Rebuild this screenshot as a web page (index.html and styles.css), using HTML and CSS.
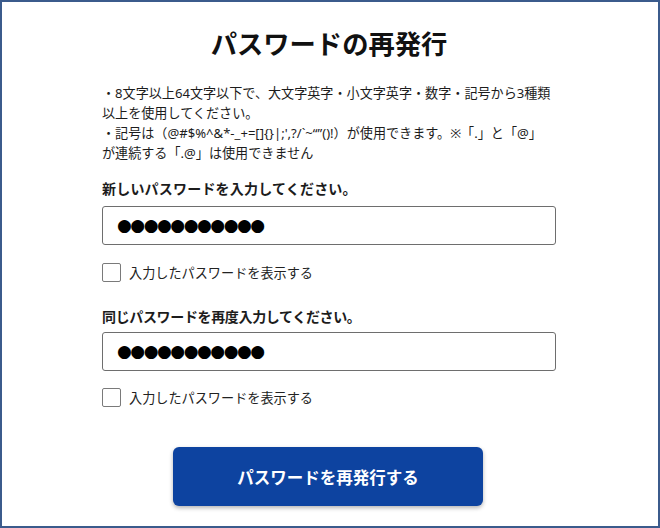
FILE: index.html
```html
<!DOCTYPE html>
<html lang="ja">
<head>
<meta charset="utf-8">
<title>パスワードの再発行</title>
<link rel="stylesheet" href="styles.css">
</head>
<body>
<div class="frame">
  <main class="panel">
    <h1 class="title">パスワードの再発行</h1>
    <div class="notes">
      <p class="note">・8文字以上64文字以下で、大文字英字・小文字英字・数字・記号から3種類<br>以上を使用してください。</p>
      <p class="note">・記号は（@#$%^&amp;*-_+=[]{}|;',?/`~“”()!）が使用できます。※「.」と「@」<br>が連続する「.@」は使用できません</p>
    </div>
    <label class="label label-first">新しいパスワードを入力してください。</label>
    <div class="field field-first">●●●●●●●●●●●</div>
    <label class="check check-first"><input type="checkbox" class="box"><span>入力したパスワードを表示する</span></label>
    <label class="label label-second">同じパスワードを再度入力してください。</label>
    <div class="field field-second">●●●●●●●●●●●</div>
    <label class="check check-second"><input type="checkbox" class="box"><span>入力したパスワードを表示する</span></label>
    <div class="actions">
      <button class="submit" type="button">パスワードを再発行する</button>
    </div>
  </main>
</div>
</body>
</html>
```
FILE: styles.css
```css
* { box-sizing: border-box; }
html, body { margin: 0; padding: 0; background: #fff; }
body {
  font-family: "Noto Sans", "Noto Sans CJK JP", sans-serif;
  color: #1c1c1c;
}
.frame {
  width: 660px;
  height: 528px;
  border: 2px solid #3b5b8c;
  padding-top: 24px;
}
.panel {
  width: 454px;
  margin: 0 auto;
  position: relative;
  left: -1px;
}
.title {
  margin: 0;
  font-size: 26.3px;
  line-height: 36px;
  font-weight: 700;
  text-align: center;
  color: #111;
}
.notes { margin-top: 21px; }
.note {
  margin: 0;
  font-size: 13.1px;
  line-height: 20px;
  white-space: nowrap;
}
.label {
  display: block;
  font-size: 14px;
  line-height: 20px;
  font-weight: 700;
  color: #1c1c1c;
}
.label-first { margin-top: 16px; letter-spacing: 0.2px; }
.label-second { margin-top: 25px; letter-spacing: -0.35px; }
.field {
  height: 39px;
  border: 1px solid #6e6e6e;
  border-radius: 3px;
  padding-left: 14px;
  font-family: "DejaVu Sans", sans-serif;
  font-size: 17px;
  line-height: 37px;
  letter-spacing: -1.5px;
  color: #000;
}
.field-first { margin-top: 7px; }
.field-second { margin-top: 5px; }
.check {
  display: flex;
  align-items: center;
  gap: 8px;
  height: 19px;
  font-size: 13.15px;
  color: #222;
}
.check-first { margin-top: 18px; }
.check-second { margin-top: 17px; }
.box {
  appearance: none;
  -webkit-appearance: none;
  margin: 0;
  width: 19px;
  height: 19px;
  border: 1px solid #7a7a7a;
  border-radius: 2px;
  background: #fff;
}
.actions {
  margin-top: 40px;
  display: flex;
  justify-content: center;
}
.submit {
  width: 310px;
  height: 59px;
  border: none;
  border-radius: 6px;
  background: #0d43a0;
  color: #fff;
  font-family: "Noto Sans", "Noto Sans CJK JP", sans-serif;
  font-size: 16.5px;
  font-weight: 700;
  box-shadow: 0 2px 4px rgba(0, 0, 0, 0.3);
  position: relative;
  left: -1px;
}
```
